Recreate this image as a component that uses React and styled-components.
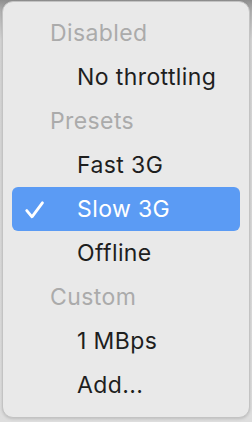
import React from "react";
import styled, { createGlobalStyle } from "styled-components";

const Global = createGlobalStyle`
  html, body {
    margin: 0;
    padding: 0;
    width: 252px;
    height: 422px;
    overflow: hidden;
    background: linear-gradient(180deg, #8e8e8e 0px, #b4b4b4 12px, #d6d6d6 40px, #dedede 100%);
    font-family: Inter, "Noto Sans", sans-serif;
    -webkit-font-smoothing: antialiased;
  }
`;

const Panel = styled.div`
  box-sizing: border-box;
  margin: 1px 2px 0 2px;
  width: 248px;
  height: 417px;
  background: #e9e9e9;
  border: 1px solid #c3c3c3;
  border-radius: 11px;
  padding: 9px 9px;
  display: flex;
  flex-direction: column;
  box-shadow: 0 1px 3px rgba(0, 0, 0, 0.15);
`;

const Row = styled.div`
  height: 44px;
  flex: 0 0 44px;
  display: flex;
  align-items: center;
  position: relative;
  border-radius: 6px;
  padding-left: ${(p) => (p.$header ? "38px" : "65px")};
  font-size: 23px;
  letter-spacing: 0.4px;
  color: ${(p) => (p.$header ? "#ababab" : p.$selected ? "#ffffff" : "#1e1e1e")};
  background: ${(p) => (p.$selected ? "#5b9bf4" : "transparent")};
  white-space: nowrap;
`;

const Check = styled.svg`
  position: absolute;
  left: 13px;
  top: 14px;
  width: 19px;
  height: 18px;
`;

const items = [
  { label: "Disabled", header: true },
  { label: "No throttling" },
  { label: "Presets", header: true },
  { label: "Fast 3G" },
  { label: "Slow 3G", selected: true },
  { label: "Offline" },
  { label: "Custom", header: true },
  { label: "1 MBps" },
  { label: "Add..." },
];

export default function App() {
  return (
    <>
      <Global />
      <Panel>
        {items.map((it) => (
          <Row key={it.label} $header={it.header} $selected={it.selected}>
            {it.selected && (
              <Check viewBox="0 0 19 18">
                <path
                  d="M1.8 9.6 L7 15.8 L17.4 1.8"
                  fill="none"
                  stroke="#ffffff"
                  strokeWidth="2.8"
                  strokeLinecap="round"
                  strokeLinejoin="round"
                />
              </Check>
            )}
            {it.label}
          </Row>
        ))}
      </Panel>
    </>
  );
}
